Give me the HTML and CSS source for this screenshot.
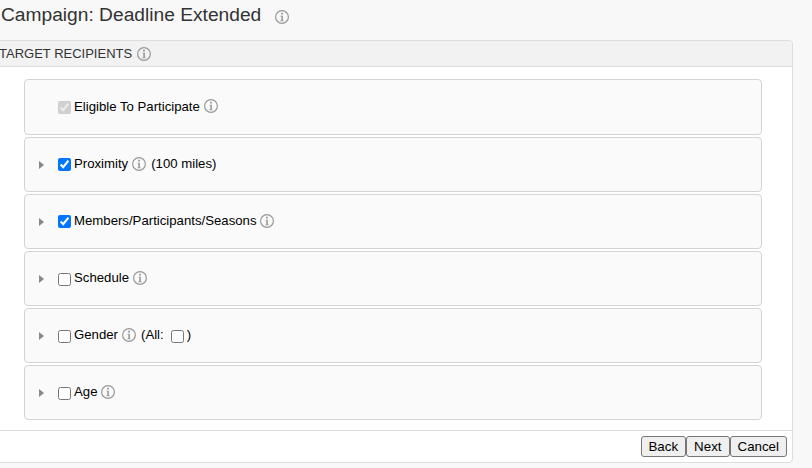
FILE: index.html
```html
<!DOCTYPE html>
<html lang="en">
  <head>
    <meta charset="UTF-8" />
    <title>Campaign: Deadline Extended</title>
    <link rel="stylesheet" href="styles.css">
  </head>
  <body>
    <svg class="icon-defs" width="0" height="0" aria-hidden="true">
      <symbol id="info" viewBox="0 0 14 14">
        <circle cx="7" cy="7" r="6.4" fill="none" stroke="#999" stroke-width="1.2" />
        <path d="M6.1 2.8h1.8v1.7H6.1z M5.5 5.7h2.4v4.7h.8v.9H5.3v-.9h1V6.6h-.8z" fill="#999" />
      </symbol>
    </svg>
    <h1 class="page-title">Campaign: Deadline Extended <svg class="info info-title"><use href="#info" /></svg></h1>
    <div class="panel">
      <div class="panel-header">TARGET RECIPIENTS <svg class="info"><use href="#info" /></svg></div>
      <div class="panel-body">
        <div class="row row-first">
          <span class="arrow-space"></span>
          <input type="checkbox" checked disabled />
          <span class="row-label">Eligible To Participate</span>
          <svg class="info"><use href="#info" /></svg>
        </div>
        <div class="row">
          <span class="arrow-space"><span class="arrow"></span></span>
          <input type="checkbox" class="check-on" checked />
          <span class="row-label">Proximity</span>
          <svg class="info"><use href="#info" /></svg>
          <span class="row-extra">(100 miles)</span>
        </div>
        <div class="row">
          <span class="arrow-space"><span class="arrow"></span></span>
          <input type="checkbox" class="check-on" checked />
          <span class="row-label row-label-long">Members/Participants/Seasons</span>
          <svg class="info"><use href="#info" /></svg>
        </div>
        <div class="row">
          <span class="arrow-space"><span class="arrow"></span></span>
          <input type="checkbox" />
          <span class="row-label">Schedule</span>
          <svg class="info"><use href="#info" /></svg>
        </div>
        <div class="row">
          <span class="arrow-space"><span class="arrow"></span></span>
          <input type="checkbox" />
          <span class="row-label">Gender</span>
          <svg class="info"><use href="#info" /></svg>
          <span class="row-extra">(All:</span>
          <input class="all-check" type="checkbox" />
          <span class="close-paren">)</span>
        </div>
        <div class="row">
          <span class="arrow-space"><span class="arrow"></span></span>
          <input type="checkbox" />
          <span class="row-label">Age</span>
          <svg class="info"><use href="#info" /></svg>
        </div>
      </div>
      <div class="panel-footer">
        <button type="button" class="btn-back">Back</button>
        <button type="button">Next</button>
        <button type="button">Cancel</button>
      </div>
    </div>
  </body>
</html>
```

FILE: styles.css
```css
body {
  margin: 0;
  background-color: #f8f8f8;
  font-family: "Liberation Sans", Arial, sans-serif;
  font-size: 13.2px;
  color: #000;
  overflow: hidden;
}
.icon-defs {
  display: block;
}
.page-title {
  margin: 0;
  padding-left: 1px;
  height: 40px;
  box-sizing: border-box;
  padding-top: 3px;
  font-size: 19.2px;
  line-height: 24px;
  font-weight: 400;
  color: #333;
}
.info {
  width: 14px;
  height: 14px;
  flex: none;
}
.info-title {
  margin-left: 8px;
  vertical-align: -3px;
}
.panel {
  margin-left: -10px;
  width: 803px;
  height: 423px;
  box-sizing: border-box;
  border: 1px solid #ddd;
  border-radius: 4px;
  background-color: #fff;
}
.panel-header {
  display: flex;
  align-items: center;
  gap: 5px;
  height: 25px;
  padding-left: 8px;
  background-color: #f2f2f2;
  border-bottom: 1px solid #ddd;
  border-radius: 4px 4px 0 0;
  font-size: 13px;
  color: #333;
}
.panel-body {
  display: flex;
  flex-direction: column;
  gap: 2px;
  padding: 12px 30px 10px 33px;
}
.row {
  display: flex;
  align-items: center;
  height: 55px;
  padding-bottom: 2px;
  box-sizing: border-box;
  border: 1px solid #d4d4d4;
  border-radius: 4px;
  background-color: #fafafa;
}
.row-first {
  height: 56px;
}
.arrow-space {
  display: flex;
  justify-content: flex-start;
  padding-left: 14px;
  width: 19px;
}
.arrow {
  width: 0;
  height: 0;
  margin-top: 3px;
  border-left: 5px solid #888;
  border-top: 4px solid transparent;
  border-bottom: 4px solid transparent;
}
.row input {
  margin: 3px 3px 0 0;
  flex: none;
}
.row .check-on {
  margin-top: 1px;
}
.row .all-check {
  margin: 3px 3px 0 7px;
}
.row-label {
  margin-right: 4px;
}
.row-label-long {
  margin-right: 3px;
}
.row-extra {
  margin-left: 5px;
}
.panel-footer {
  display: flex;
  justify-content: flex-end;
  align-items: center;
  height: 31px;
  padding-right: 5px;
  border-top: 1px solid #ddd;
}
.panel-footer button {
  height: 21px;
  padding: 0 7px;
  font-family: inherit;
  font-size: 13.33px;
  color: #000;
  background-color: #efefef;
  border: 1px solid #767676;
  border-radius: 3px;
}
.panel-footer .btn-back {
  padding: 0 7px 0 6px;
}
```
